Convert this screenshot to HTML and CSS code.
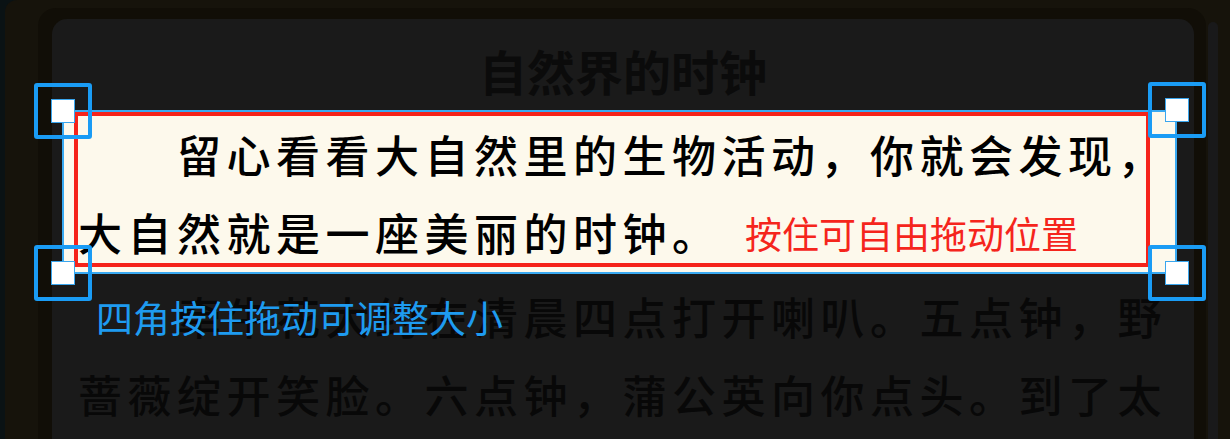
FILE: index.html
```html
<!DOCTYPE html>
<html lang="zh-CN">
<head>
  <meta charset="UTF-8">
  <meta name="viewport" content="width=device-width, initial-scale=1.0">
  <title>自然界的时钟 - 截取段落</title>
  <link rel="stylesheet" href="styles.css">
</head>
<body>
  <div class="frame">
    <div class="bezel">
      <div class="panel">
        <h1 class="title">自然界的时钟</h1>

        <!-- selected area, drawn under the text -->
        <div class="crop">
          <div class="crop-line"></div>
        </div>

        <div class="article">
          <p class="lead">留心看看大自然里的生物活动，你就会发现，大自然就是一座美丽的时钟。</p>
          <p>牵牛花大约在清晨四点打开喇叭。五点钟，野蔷薇绽开笑脸。六点钟，蒲公英向你点头。到了太阳升得老高的中午，午时花开了。</p>
        </div>

        <!-- handles and hints, drawn over the text -->
        <div class="crop-tools">
          <div class="handle tl"><span class="knob"></span></div>
          <div class="handle tr"><span class="knob"></span></div>
          <div class="handle bl"><span class="knob"></span></div>
          <div class="handle br"><span class="knob"></span></div>
          <span class="hint move">按住可自由拖动位置</span>
          <span class="hint resize">四角按住拖动可调整大小</span>
        </div>
      </div>
    </div>
    <div class="track"></div>
  </div>
</body>
</html>
```

FILE: styles.css
```css
html, body {
  height: 100%;
}

body {
  margin: 0;
  overflow: hidden;
  background-color: #0a1214;
  font-family: "Noto Sans CJK SC", "Noto Sans", sans-serif;
}

.frame {
  display: flex;
  height: 100%;
  margin-left: 5px;
  padding: 8px 0 0 33px;
  box-sizing: border-box;
  background-color: #16130b;
  border-top-left-radius: 12px;
}

.bezel {
  width: 1168px;
  padding: 11px 12px 0 14px;
  box-sizing: border-box;
  background-color: #110e07;
  border-radius: 18px 18px 0 0;
}

.panel {
  position: relative;
  display: flex;
  flex-direction: column;
  height: 100%;
  padding-top: 14px;
  box-sizing: border-box;
  background-color: #1a1a1a;
  border-radius: 15px 15px 0 0;
}

.track {
  width: 10px;
  margin: 14px 0 0 2px;
  background-color: #19191a;
  border-radius: 5px 5px 0 0;
}

.title {
  margin: 0;
  height: 74px;
  line-height: 74px;
  text-align: center;
  font-size: 48px;
  font-weight: 700;
  color: #0b0b0b;
}

.article {
  position: relative;
  z-index: 1;
  flex: 1;
  min-height: 0;
  overflow: hidden;
  width: 1100px;
  padding-left: 26px;
}

.article p {
  margin: 6px 0 0;
  font-size: 44px;
  font-weight: 500;
  line-height: 78px;
  letter-spacing: 5.5px;
  text-indent: 99px;
  color: #080808;
}

.article .lead {
  margin-top: 8px;
  color: #000;
}

/* selection box */
.crop,
.crop-tools {
  position: absolute;
  left: 10px;
  top: 91px;
  width: 1115px;
  height: 164px;
  box-sizing: border-box;
}

.crop {
  z-index: 0;
  border: 2px solid #3aaaf2;
  background-color: #fdf9ec;
}

.crop-line {
  margin-left: 10px;
  width: 1076px;
  height: 155px;
  box-sizing: border-box;
  border: 4px solid #f5231a;
}

.crop-tools {
  z-index: 2;
}

.handle {
  position: absolute;
  display: flex;
  justify-content: center;
  align-items: center;
  width: 58px;
  height: 56px;
  box-sizing: border-box;
  border: 4px solid #1a9cf5;
  border-radius: 3px;
}

.handle.tl { left: -28px; top: -27px; }
.handle.tr { right: -29px; top: -28px; }
.handle.bl { left: -28px; bottom: -27px; }
.handle.br { right: -29px; bottom: -27px; }

.knob {
  width: 24px;
  height: 24px;
  box-sizing: border-box;
  background-color: #fff;
  border: 1px solid #3aa6ee;
}

.hint {
  position: absolute;
  font-size: 37px;
  line-height: 37px;
  white-space: nowrap;
}

.hint.move {
  left: 683px;
  top: 105px;
  color: #f5251c;
}

.hint.resize {
  left: 34px;
  top: 189px;
  color: #1e9bf0;
}
```
